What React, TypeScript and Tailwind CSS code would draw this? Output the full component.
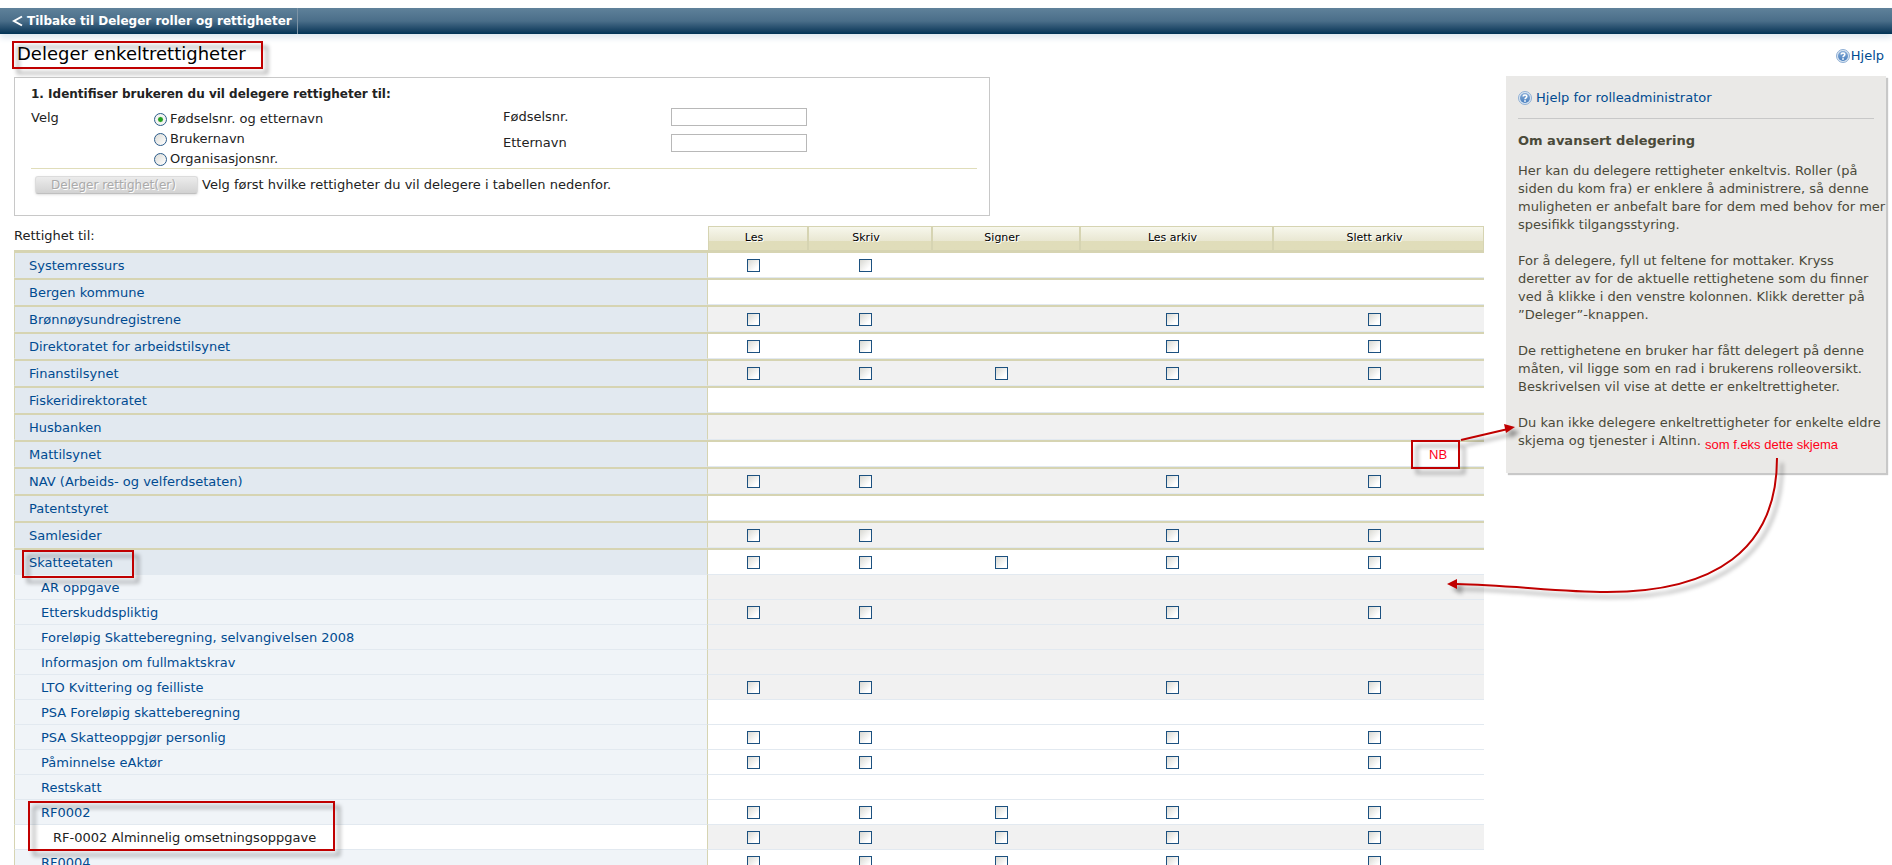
import React from 'react';

type Row = {
    name: string;
    level: 0 | 1 | 2;
    // one character per column: Les, Skriv, Signer, Les arkiv, Slett arkiv
    boxes: string;
    shaded?: boolean;
    mark?: string;
};

const columns = ['Les', 'Skriv', 'Signer', 'Les arkiv', 'Slett arkiv'];

const rows: Row[] = [
    { name: 'Systemressurs', level: 0, boxes: 'xx---' },
    { name: 'Bergen kommune', level: 0, boxes: '-----' },
    { name: 'Brønnøysundregistrene', level: 0, boxes: 'xx-xx', shaded: true },
    { name: 'Direktoratet for arbeidstilsynet', level: 0, boxes: 'xx-xx' },
    { name: 'Finanstilsynet', level: 0, boxes: 'xxxxx', shaded: true },
    { name: 'Fiskeridirektoratet', level: 0, boxes: '-----' },
    { name: 'Husbanken', level: 0, boxes: '-----', shaded: true },
    { name: 'Mattilsynet', level: 0, boxes: '-----' },
    { name: 'NAV (Arbeids- og velferdsetaten)', level: 0, boxes: 'xx-xx', shaded: true },
    { name: 'Patentstyret', level: 0, boxes: '-----' },
    { name: 'Samlesider', level: 0, boxes: 'xx-xx', shaded: true },
    { name: 'Skatteetaten', level: 0, boxes: 'xxxxx', mark: 'left-[7px] top-0 h-7 w-28' },
    { name: 'AR oppgave', level: 1, boxes: '-----', shaded: true },
    { name: 'Etterskuddspliktig', level: 1, boxes: 'xx-xx', shaded: true },
    { name: 'Foreløpig Skatteberegning, selvangivelsen 2008', level: 1, boxes: '-----', shaded: true },
    { name: 'Informasjon om fullmaktskrav', level: 1, boxes: '-----', shaded: true },
    { name: 'LTO Kvittering og feilliste', level: 1, boxes: 'xx-xx', shaded: true },
    { name: 'PSA Foreløpig skatteberegning', level: 1, boxes: '-----' },
    { name: 'PSA Skatteoppgjør personlig', level: 1, boxes: 'xx-xx' },
    { name: 'Påminnelse eAktør', level: 1, boxes: 'xx-xx' },
    { name: 'Restskatt', level: 1, boxes: '-----' },
    { name: 'RF0002', level: 1, boxes: 'xxxxx', mark: 'left-[13px] top-px h-[50px] w-[307px]' },
    { name: 'RF-0002 Alminnelig omsetningsoppgave', level: 2, boxes: 'xxxxx', shaded: true },
    { name: 'RF0004', level: 1, boxes: 'xxxxx' },
];

const nameStyles = [
    'bg-[#e2e9f0] pl-[14px]',
    'bg-[#f0f4f8] pl-[26px]',
    'bg-white pl-[38px]',
];

const Marker = ({ className }: { className: string }) => (
    <span
        className={`pointer-events-none absolute z-10 border-2 border-[#c00000] drop-shadow-[5px_5px_2px_rgba(0,0,0,0.4)] ${className}`}
    />
);

const HelpIcon = () => (
    <svg width="14" height="14" viewBox="0 0 14 14" className="shrink-0" aria-hidden="true">
        <defs>
            <linearGradient id="help" x1="0" y1="0" x2="0" y2="1">
                <stop offset="0" stopColor="#86abd6" />
                <stop offset="1" stopColor="#4a80bf" />
            </linearGradient>
        </defs>
        <circle cx="7" cy="7" r="6.5" fill="#dbe6f2" stroke="#8fafd4" />
        <circle cx="7" cy="7" r="5" fill="url(#help)" />
        <path d="M5.2 5.6C5.2 3.4 8.8 3.4 8.8 5.6C8.8 6.8 7 6.8 7 8.3" fill="none" stroke="#fff" strokeWidth="1.6" />
        <rect x="6.2" y="9.2" width="1.6" height="1.6" fill="#fff" />
    </svg>
);

const Radio = ({ label, checked }: { label: string; checked?: boolean }) => (
    <label className="flex h-5 items-center gap-[3px]">
        <input
            type="radio"
            name="identifikasjon"
            defaultChecked={checked}
            className="size-[13px] appearance-none rounded-full border border-[#2b5c8a] bg-linear-to-br from-[#dcdcd7] to-white checked:bg-radial checked:from-[#21a121] checked:from-25% checked:to-[#f4f4f2] checked:to-40%"
        />
        {label}
    </label>
);

const IdentifyForm = () => (
    <form className="h-[139px] w-[976px] max-w-full border border-[#c8c8c8] pt-1.5 pr-3 pl-4">
        <h2 className="h-5 text-[12px] leading-5 font-bold">1. Identifiser brukeren du vil delegere rettigheter til:</h2>
        <div className="flex h-[65px] border-b border-[#e0ddba] pt-1">
            <span className="w-[123px] leading-5">Velg</span>
            <div className="w-[349px] pt-px">
                <Radio label="Fødselsnr. og etternavn" checked />
                <Radio label="Brukernavn" />
                <Radio label="Organisasjonsnr." />
            </div>
            <div className="flex flex-col gap-2">
                {['Fødselsnr.', 'Etternavn'].map((label) => (
                    <label key={label} className="flex h-[18px] items-center">
                        <span className="w-[168px]">{label}</span>
                        <input type="text" className="h-[18px] w-[136px] border border-[#b8b8b8] bg-white px-1" />
                    </label>
                ))}
            </div>
        </div>
        <div className="flex items-center gap-1 pt-1.5 pl-1">
            <button
                type="button"
                disabled
                className="h-[18px] w-[163px] rounded-[3px] border border-[#dcdcdc] border-b-[#c0c0c0] bg-linear-to-b from-[#ececec] to-[#d2d2d2] pr-1.5 text-[12px] leading-4 text-[#aaaaaa] shadow-sm text-shadow-[1px_1px_0_#ffffff]"
            >
                Deleger rettighet(er)
            </button>
            <span>Velg først hvilke rettigheter du vil delegere i tabellen nedenfor.</span>
        </div>
    </form>
);

const RightsTable = () => (
    <table className="mt-2.5 w-full table-fixed border-separate border-spacing-0">
        <colgroup>
            <col />
            <col className="w-[100px]" />
            <col className="w-[124px]" />
            <col className="w-[148px]" />
            <col className="w-[193px]" />
            <col className="w-[211px]" />
        </colgroup>
        <thead>
            <tr>
                <th scope="col" className="h-[27px] border-b-3 border-[#d6d4b2] p-0 pb-1 text-left leading-5 font-normal">
                    Rettighet til:
                </th>
                {columns.map((column) => (
                    <th
                        key={column}
                        scope="col"
                        className="h-[27px] border-x border-t border-b-3 border-[#d6d4b2] bg-linear-to-b from-[#f7f7ec] via-[#e9e7d2] via-60% to-[#e0ddba] to-60% p-0 pr-2 pb-0.5 text-[11px] leading-3 font-normal text-black text-shadow-[1px_1px_0_#ffffff]"
                    >
                        {column}
                    </th>
                ))}
            </tr>
        </thead>
        <tbody>
            {rows.map((row, index) => {
                const ruled = row.level === 0 && index > 0;
                const edge = ruled ? 'h-[27px] border-t-2 border-t-[#d6d4b2]' : 'h-[25px]';
                return (
                    <tr key={row.name}>
                        <th
                            scope="row"
                            className={`relative border-x border-b border-x-[#d6d4b2] border-b-[#e2e9f0] p-0 pt-0.5 text-left leading-5 font-normal ${edge} ${nameStyles[row.level]}`}
                        >
                            {row.level === 2 ? row.name : <a href="#" className="text-[#004b91]">{row.name}</a>}
                            {row.mark && <Marker className={row.mark} />}
                        </th>
                        {columns.map((column, i) => (
                            <td
                                key={column}
                                className={`border-b border-b-[#e2e9f0] p-0 pr-[9px] text-center ${edge} ${row.shaded ? 'bg-[#f1f1f1]' : 'bg-white'}`}
                            >
                                {row.boxes[i] === 'x' && (
                                    <input
                                        type="checkbox"
                                        aria-label={`${row.name}: ${column}`}
                                        className="mx-auto block size-[13px] appearance-none border border-[#1c5180] bg-linear-to-br from-[#d8d8d2] to-white to-75%"
                                    />
                                )}
                            </td>
                        ))}
                    </tr>
                );
            })}
        </tbody>
    </table>
);

const HelpPanel = () => (
    <aside className="relative w-[380px] shrink-0 self-start bg-[#eae9e7] px-3 pt-[13px] pb-[23px] leading-[18px] text-[#4a4a3a] shadow-[2px_2px_1px_#c8c8c8]">
        <a href="#" className="flex items-center gap-1 border-b border-[#c8c8c8] pb-[11px] text-[#004b91]">
            <HelpIcon />
            Hjelp for rolleadministrator
        </a>
        <h2 className="pt-[13px] pb-3 text-[13px] font-bold">Om avansert delegering</h2>
        <div className="-mr-3 flex flex-col gap-[18px]">
            <p>
                Her kan du delegere rettigheter enkeltvis. Roller (på siden du kom fra) er enklere å administrere, så
                denne muligheten er anbefalt bare for dem med behov for mer spesifikk tilgangsstyring.
            </p>
            <p>
                For å delegere, fyll ut feltene for mottaker. Kryss deretter av for de aktuelle rettighetene som du
                finner ved å klikke i den venstre kolonnen. Klikk deretter på ”Deleger”-knappen.
            </p>
            <p>
                De rettighetene en bruker har fått delegert på denne måten, vil ligge som en rad i brukerens
                rolleoversikt. Beskrivelsen vil vise at dette er enkeltrettigheter.
            </p>
            <p>Du kan ikke delegere enkeltrettigheter for enkelte eldre skjema og tjenester i Altinn.</p>
        </div>

        {/* red notes on top of the page */}
        <Marker className="top-[364px] -left-[95px] h-[29px] w-[49px]" />
        <span className="absolute top-[370px] -left-[77px] font-['Liberation_Sans',sans-serif] text-[13px] text-[#ff0018]">
            NB
        </span>
        <span className="absolute top-[360px] left-[199px] font-['Liberation_Sans',sans-serif] text-[13px] whitespace-nowrap text-[#ff0018]">
            som f.eks dette skjema
        </span>
        <svg
            width="380"
            height="530"
            className="pointer-events-none absolute top-0 left-0 overflow-visible drop-shadow-[5px_5px_2px_rgba(0,0,0,0.4)]"
            aria-hidden="true"
        >
            <g fill="none" stroke="#c00000" strokeWidth="2">
                <path d="M-45 364L2 353" />
                <path d="M271 382C271 474 208 516 101 516C54 516 4 509 -50 508" />
            </g>
            <path d="M9 351L-2 348L0 357Z" fill="#c00000" />
            <path d="M-59 508L-49 503L-49 513Z" fill="#c00000" />
        </svg>
    </aside>
);

const App = () => {
    return (
        <div className="h-screen overflow-hidden bg-white pt-2 font-['DejaVu_Sans',Verdana,sans-serif] text-[13px] text-[#222222]">
            <nav className="flex h-[26px] bg-linear-to-b from-[#5f819a] via-[#4a6e89] via-50% to-[#003355] shadow-[0_4px_6px_#dde7ef]">
                <a
                    href="#"
                    className="flex w-[298px] items-center gap-1 border-r border-[#7c93a5] pl-3 text-[12px] font-bold whitespace-nowrap text-white"
                >
                    <svg width="11" height="12" viewBox="0 0 11 12" aria-hidden="true">
                        <path d="M10 1.5L2 6L10 10.5" fill="none" stroke="#fff" strokeWidth="2" />
                    </svg>
                    Tilbake til Deleger roller og rettigheter
                </a>
            </nav>
            <div className="flex h-[42px] items-center justify-between pr-2 pl-3">
                <h1 className="relative h-7 w-[251px] pl-[5px] text-[18px] leading-[26px] text-black">
                    Deleger enkeltrettigheter
                    <Marker className="inset-0" />
                </h1>
                <a href="#" className="flex items-center gap-px pt-0.5 text-[#004b91]">
                    <HelpIcon />
                    Hjelp
                </a>
            </div>
            <div className="flex gap-[22px] pr-1.5 pl-3.5">
                <main className="min-w-0 flex-1 pt-px">
                    <IdentifyForm />
                    <RightsTable />
                </main>
                <HelpPanel />
            </div>
        </div>
    );
};

export default App;
